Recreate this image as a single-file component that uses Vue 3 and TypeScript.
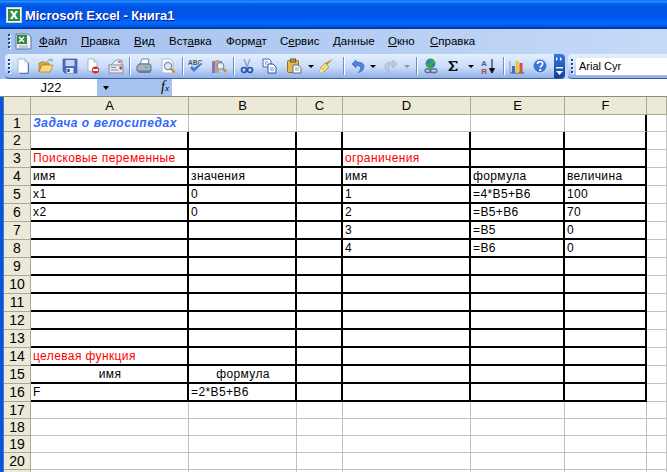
<script setup lang="ts">
interface Tool { w: number; svg?: string; kind?: 'sep' | 'arrow' | 'arrowOff' }

const menu = [
  { pre: '', u: 'Ф', post: 'айл', w: 42 },
  { pre: '', u: 'П', post: 'равка', w: 53 },
  { pre: '', u: 'В', post: 'ид', w: 35 },
  { pre: 'Вст', u: 'а', post: 'вка', w: 57 },
  { pre: 'Форм', u: 'а', post: 'т', w: 54 },
  { pre: 'С', u: 'е', post: 'рвис', w: 53 },
  { pre: '', u: 'Д', post: 'анные', w: 55 },
  { pre: '', u: 'О', post: 'кно', w: 42 },
  { pre: '', u: 'С', post: 'правка', w: 60 },
]

const tools: Tool[] = [
  { w: 23, svg: '<path d="M3 1h7l3 3v11H3z" fill="#fff" stroke="#a9b8d2"/><path d="M10 1v3h3" fill="#dfe8f6" stroke="#a9b8d2"/><path d="M13.500 5v10.500H5" fill="none" stroke="#5c78a8"/>' },
  { w: 24, svg: '<path d="M1 14V5h1l1-1h4l1 1h3v2H4z" fill="#d9a93c" stroke="#a37a22" stroke-width=".7"/><path d="M1 14l3-7h11l-3 7z" fill="#f7d980" stroke="#b08628" stroke-width=".8"/><path d="M9 4c1-2 3-3 5-2M12.500 .8l2 1.300-1.500 1.600" fill="none" stroke="#7a94bd" stroke-width="1"/>' },
  { w: 23, svg: '<path d="M1 1h14v14H3l-2-2z" fill="#4a6cc0" stroke="#34509e" stroke-width=".6"/><rect x="3.500" y="2" width="9" height="6" fill="#c8d6f2"/><rect x="4.500" y="10" width="7" height="5" fill="#e7e7ef"/><rect x="5.500" y="11" width="2" height="3" fill="#26356e"/>' },
  { w: 24, svg: '<path d="M3 1h6l3 3v9H3z" fill="#fff" stroke="#a9b8d2"/><path d="M9 1v3h3" fill="#dfe8f6" stroke="#a9b8d2"/><circle cx="10.500" cy="12" r="3.600" fill="#d8341c"/><rect x="8" y="11" width="5" height="2" fill="#fff"/>' },
  { w: 21, svg: '<path d="M3 7l5-5h6v5" fill="#eef2f8" stroke="#8c98ab"/><rect x="1" y="7" width="14" height="8" fill="#e9ebf1" stroke="#7f8ca3"/><rect x="3" y="9" width="5" height="1" fill="#7f8ca3"/><rect x="3" y="11.500" width="7" height="1" fill="#7f8ca3"/><rect x="11.500" y="8.500" width="2.500" height="3" fill="#c5473a"/><rect x="10" y="3" width="3" height="2" fill="#c98080"/>' },
  { w: 6, kind: 'sep' },
  { w: 23, svg: '<path d="M4 6l2-5h7l-1 5z" fill="#fff" stroke="#7a879c"/><path d="M1 8l2-2h11l1 2v5H1z" fill="#a9b3c4" stroke="#5f6c84"/><path d="M2 13h13l-1 2H3z" fill="#6f7c93"/><rect x="9" y="8.500" width="3" height="1.600" fill="#32d14a"/>' },
  { w: 25, svg: '<path d="M2 1h8l3 3v11H2z" fill="#fff" stroke="#a9b8d2"/><circle cx="8" cy="8" r="3.600" fill="#dceaf8" stroke="#7489ab" stroke-width="1.200"/><path d="M10.500 10.500l4 4" stroke="#c98b1e" stroke-width="2.200"/>' },
  { w: 4, kind: 'sep' },
  { w: 23, svg: '<text x="0" y="6.500" font-family=\'Liberation Sans\' font-size="6.500" font-weight="700" fill="#565656">ABC</text><path d="M2 10l4 4 8-8-1-1-7 5-2-2z" fill="#3f78d8"/>' },
  { w: 23, svg: '<rect x="1" y="3" width="3.500" height="12" fill="#8d74b8"/><rect x="4.500" y="2" width="3.500" height="13" fill="#c5a868"/><rect x="8" y="3" width="3" height="5" fill="#8d74b8"/><circle cx="9.500" cy="8" r="3.400" fill="#e6f0fb" stroke="#6f7f9a"/><path d="M12 10.500l3 3.500" stroke="#c98b1e" stroke-width="2.200"/>' },
  { w: 6, kind: 'sep' },
  { w: 21, svg: '<path d="M5 1l3 8M11 1L8 9" stroke="#98a2b5" stroke-width="1.400" fill="none"/><circle cx="5" cy="12" r="2.500" fill="none" stroke="#2a52b0" stroke-width="1.700"/><circle cx="11" cy="12" r="2.500" fill="none" stroke="#2a52b0" stroke-width="1.700"/>' },
  { w: 24, svg: '<path d="M2 1h6l2 2v6H2z" fill="#fff" stroke="#3d66ae"/><path d="M7 6h5l3 3v6H7z" fill="#fff" stroke="#2c55a2"/><path d="M4 4h3M4 6h2M9 10h4M9 12h4" stroke="#6c8cc4"/>' },
  { w: 26, svg: '<rect x="1.500" y="2.500" width="11" height="12" rx="1" fill="#e5b94a" stroke="#96701e"/><rect x="4.500" y="1" width="5" height="3" fill="#a79a78" stroke="#6d5f3a"/><path d="M7 7h5l3 2.500V15H7z" fill="#fff" stroke="#5d6f90"/><path d="M9 10h4M9 12h4" stroke="#8a9ab6"/>' },
  { w: 8, kind: 'arrow' },
  { w: 22, svg: '<path d="M15 1L9 7 7 5z" fill="#c58b29"/><path d="M2 10l5-5 4 4-5 5z" fill="#f1d884" stroke="#a98a3c" stroke-width=".7"/><path d="M1 12l3-2 2 4-3 1z" fill="#f4e7c0" stroke="#b8a264" stroke-width=".5"/>' },
  { w: 12, kind: 'sep' },
  { w: 18, svg: '<path d="M6 2L2 6l4 4V7.500c3 0 5 1 4.500 3.500-.3 1.500-1 2.700-2 3.500 3-.5 5.500-3 5.500-6 0-3.500-3.500-4.500-8-4.500z" fill="#4a86e4" stroke="#2c5cab" stroke-width=".6"/>' },
  { w: 12, kind: 'arrow' },
  { w: 24, svg: '<path d="M10 2l4 4-4 4V7.500c-3 0-5 1-4.500 3.500.3 1.500 1 2.700 2 3.500-3-.5-5.500-3-5.500-6 0-3.500 3.500-4.500 8-4.500z" fill="#bccbe2" stroke="#93a5c2" stroke-width=".6"/>' },
  { w: 8, kind: 'arrowOff' },
  { w: 11, kind: 'sep' },
  { w: 18, svg: '<circle cx="7.500" cy="5.500" r="5" fill="#3aa358"/><path d="M5 2c2 0 3 1 2 3s-3 1-4 0M9 6c2-1 3 0 3 1l-3 3z" fill="#3a77cf"/><rect x="2" y="11" width="6" height="3.500" rx="1.700" fill="none" stroke="#5d6f90" stroke-width="1.300"/><rect x="7" y="11" width="7" height="3.500" rx="1.700" fill="none" stroke="#5d6f90" stroke-width="1.300"/>' },
  { w: 26, svg: '<path d="M3.500 3h9v2.500h-1L10.500 4.200H6.500L9.500 8l-3 3.800h4l1-1.300h1V13h-9v-1L7 8 3.500 4z" fill="#111"/>' },
  { w: 10, kind: 'arrow' },
  { w: 24, svg: '<text x="1" y="7.500" font-family=\'Liberation Sans\' font-size="8" font-weight="700" fill="#3a5da8">А</text><text x="1" y="15.500" font-family=\'Liberation Sans\' font-size="8" font-weight="700" fill="#a8504a">Я</text><path d="M12 1v12M9.500 10.500L12 15l2.500-4.500z" stroke="#111" fill="#111"/>' },
  { w: 6, kind: 'sep' },
  { w: 22, svg: '<path d="M1 15h14" stroke="#555"/><path d="M1 3v12" stroke="#8f9bb0"/><rect x="3" y="8" width="3" height="7" fill="#3a6ed0"/><rect x="6.500" y="3" width="3" height="12" fill="#ecc62c"/><rect x="10.500" y="5" width="3" height="10" fill="#d8542c"/>' },
  { w: 24, svg: '<circle cx="8" cy="8" r="7" fill="#3c74d8" stroke="#c8d8f2" stroke-width="1.200"/><path d="M5.500 6c0-3.200 5.200-3.200 5.200-.2 0 2-2.500 2-2.500 4" fill="none" stroke="#fff" stroke-width="1.700"/><rect x="7.200" y="11" width="2" height="2" fill="#fff"/>' },
]

const colLetters = ['A', 'B', 'C', 'D', 'E', 'F', '']

type CellText = { t: string; cls?: string }
const content: Record<number, Record<number, CellText>> = {
  1: { 0: { t: 'Задача о велосипедах', cls: 'title-cell' } },
  3: { 0: { t: 'Поисковые переменные', cls: 'red' }, 3: { t: 'ограничения', cls: 'red' } },
  4: { 0: { t: 'имя' }, 1: { t: 'значения' }, 3: { t: 'имя' }, 4: { t: 'формула' }, 5: { t: 'величина' } },
  5: { 0: { t: 'x1' }, 1: { t: '0' }, 3: { t: '1' }, 4: { t: '=4*B5+B6' }, 5: { t: '100' } },
  6: { 0: { t: 'x2' }, 1: { t: '0' }, 3: { t: '2' }, 4: { t: '=B5+B6' }, 5: { t: '70' } },
  7: { 3: { t: '3' }, 4: { t: '=B5' }, 5: { t: '0' } },
  8: { 3: { t: '4' }, 4: { t: '=B6' }, 5: { t: '0' } },
  14: { 0: { t: 'целевая функция', cls: 'red' } },
  15: { 0: { t: 'имя', cls: 'center' }, 1: { t: 'формула', cls: 'center' } },
  16: { 0: { t: 'F' }, 1: { t: '=2*B5+B6' } },
}

const rows = Array.from({ length: 21 }, (_, i) => i + 1)
const cols = [0, 1, 2, 3, 4, 5, 6]

function cellClass(r: number, c: number): (string | undefined)[] {
  const boxed = r >= 2 && r <= 16
  const vertical = c < 6 && (boxed || (r === 1 && c === 5))
  return [
    boxed && c < 6 ? 'bb' : '',
    vertical ? 'br' : '',
    content[r]?.[c]?.cls,
  ]
}
</script>

<template>
  <div class="win">
    <header class="titlebar">
      <svg class="appicon" width="16" height="16" viewBox="0 0 16 16">
        <rect x=".5" y=".5" width="15" height="15" fill="#fff" stroke="#c9d6c4" />
        <rect x="2" y="2" width="12" height="12" fill="#2f8f46" />
        <path d="M4 4h2.500L8 6.500 9.500 4H12L9.300 8 12 12H9.500L8 9.500 6.500 12H4l2.700-4z" fill="#fff" />
      </svg>
      <span class="titletext">Microsoft Excel - Книга1</span>
    </header>

    <nav class="menubar">
      <span class="grip"><i v-for="n in 4" :key="n"></i></span>
      <svg class="docicon" width="18" height="17" viewBox="0 0 18 17">
        <path d="M2 1h12l3 3v12H2z" fill="#eef1f6" stroke="#64748f" />
        <rect x="3" y="2" width="10" height="9" fill="#2e8a44" />
        <path d="M5 4l5 5M10 4L5 9" stroke="#fff" stroke-width="1.500" />
        <path d="M5 13h9M5 15h9" stroke="#98a6bf" />
      </svg>
      <span v-for="m in menu" :key="m.u + m.post" class="menuitem" :style="{ width: m.w + 'px' }">{{ m.pre }}<u>{{ m.u }}</u>{{ m.post }}</span>
    </nav>

    <div class="toolrow">
      <div class="toolbar">
        <span class="grip"><i v-for="n in 4" :key="n"></i></span>
        <template v-for="(tool, i) in tools" :key="i">
          <span class="tool" :style="{ width: tool.w + 'px' }">
            <i v-if="tool.kind === 'sep'" class="sep"></i>
            <i v-else-if="tool.kind === 'arrow'" class="arrow"></i>
            <i v-else-if="tool.kind === 'arrowOff'" class="arrow off"></i>
            <svg v-else width="16" height="16" viewBox="0 0 16 16" v-html="tool.svg"></svg>
          </span>
        </template>
        <span class="chevron">
          <svg width="11" height="24" viewBox="0 0 11 24">
            <path d="M2 3l2 2-2 2zM6 3l2 2-2 2z" fill="#fff" />
            <rect x="2" y="13" width="7" height="1.500" fill="#fff" />
            <path d="M2 17h7l-3.500 4z" fill="#fff" />
          </svg>
        </span>
      </div>
      <div class="fontbar">
        <span class="grip"><i v-for="n in 4" :key="n"></i></span>
        <span class="fontbox">Arial Cyr</span>
      </div>
    </div>

    <div class="formula">
      <div class="namebox">J22</div>
      <div class="fxpart">
        <i class="arrow namearrow"></i>
        <span class="fx">f<small>x</small></span>
      </div>
      <div class="fxinput"></div>
    </div>

    <div class="body">
      <div class="edge"></div>
      <div class="sheet">
        <div class="corner"></div>
        <div v-for="l in colLetters" :key="l" class="colhead">{{ l }}</div>
        <template v-for="r in rows" :key="r">
          <div class="rowhead" :class="{ tall: r >= 2 && r <= 16 }">{{ r <= 20 ? r : '' }}</div>
          <div v-for="c in cols" :key="c" class="cell" :class="cellClass(r, c)">{{ content[r]?.[c]?.t }}</div>
        </template>
      </div>
    </div>
  </div>
</template>

<style>
html, body { margin: 0; overflow: hidden; }
</style>

<style scoped>
.win {
  width: 667px;
  height: 472px;
  overflow: hidden;
  background: #fff;
  font-family: "Liberation Sans", Arial, sans-serif;
  color: #000;
}
.titlebar {
  height: 29px;
  display: flex;
  align-items: center;
  padding: 1px 0 0 6px;
  box-sizing: border-box;
  background: linear-gradient(#0058ee 0, #3593ff 4%, #288eff 6%, #127dff 8%, #036ffc 10%, #0262ee 14%, #0057e5 20%, #0054e3 24%, #0055eb 56%, #005bf5 66%, #026afe 76%, #0062ef 86%, #0052d6 92%, #0040ab 96%, #003092 100%);
}
.appicon { flex: none; }
.titletext {
  margin-left: 3px;
  color: #fff;
  font-weight: 700;
  font-size: 13px;
  letter-spacing: -.08px;
  text-shadow: 1px 1px 0 #0f1089;
  white-space: nowrap;
}
.menubar {
  height: 25px;
  display: flex;
  align-items: center;
  box-sizing: border-box;
  padding: 0 0 1px 8px;
  background: linear-gradient(90deg, #a3bfee, #c5daf8);
  font-size: 11.5px;
  white-space: nowrap;
}
.docicon { margin: 0 7px 0 3px; flex: none; }
.menuitem { flex: none; }
.grip {
  display: flex;
  flex-direction: column;
  gap: 2px;
  flex: none;
  width: 3px;
}
.grip i {
  width: 2px;
  height: 2px;
  background: #27417d;
  box-shadow: 1px 1px 0 #fff;
}
.toolrow {
  height: 25px;
  display: flex;
  background: linear-gradient(90deg, #a3bfee, #c5daf8);
}
.toolbar {
  margin-left: 5px;
  width: 560px;
  display: flex;
  align-items: center;
  box-sizing: border-box;
  padding-left: 3px;
  border-radius: 4px;
  border-bottom: 1px solid #3b619c;
  background: linear-gradient(#e3effd, #c9dcf9 55%, #91b0e8);
}
.tool {
  flex: none;
  display: flex;
  align-items: center;
  justify-content: center;
  height: 22px;
}
.sep {
  width: 1px;
  height: 18px;
  background: #6a8ccb;
  box-shadow: 1px 0 0 #fff;
}
.arrow {
  width: 0;
  height: 0;
  border-left: 3px solid transparent;
  border-right: 3px solid transparent;
  border-top: 3px solid #000;
}
.arrow.off { border-top-color: #8a94a8; }
.chevron {
  margin-left: auto;
  width: 11px;
  height: 24px;
  background: linear-gradient(#3a78dc, #0f3f9e);
  border-radius: 0 4px 4px 0;
  flex: none;
}
.chevron svg { display: block; }
.fontbar {
  margin-left: 3px;
  flex: 1;
  display: flex;
  align-items: center;
  padding-left: 3px;
  border-bottom: 1px solid #3b619c;
  border-radius: 4px 0 0 4px;
  background: linear-gradient(#e3effd, #c9dcf9 55%, #91b0e8);
}
.fontbox {
  margin-left: 2px;
  flex: 1;
  height: 17px;
  line-height: 17px;
  padding-left: 3px;
  background: #fff;
  font-size: 11px;
}
.formula {
  height: 17px;
  display: flex;
  background: #fff;
  padding-left: 5px;
}
.namebox {
  width: 92px;
  font-size: 13px;
  line-height: 17px;
  text-align: center;
}
.fxpart {
  width: 75px;
  background: #a6c2ee;
  display: flex;
  align-items: center;
  justify-content: space-between;
  box-sizing: border-box;
  padding: 0 3px 0 6px;
}
.namearrow {
  border-left-width: 3.5px;
  border-right-width: 3.5px;
  border-top-width: 4px;
}
.fx {
  font-family: "Liberation Serif", serif;
  font-style: italic;
  font-size: 14px;
  line-height: 15px;
}
.fx small { font-size: 9px; }
.fxinput { flex: 1; }
.body {
  display: flex;
  border-top: 1px solid #8f8b77;
}
.edge {
  width: 4px;
  flex: none;
  background: linear-gradient(90deg, #0a53d9, #0a53d9 75%, #7d99cf);
  height: 375px;
}
.sheet {
  flex: 1;
  display: grid;
  grid-template-columns: 27px 158px 108px 46px 128px 94px 82px 1fr;
  grid-auto-rows: auto;
  font-size: 13px;
}
.corner, .colhead, .rowhead {
  background: #ece9d8;
  box-sizing: border-box;
  border-right: 1px solid #aca899;
  border-bottom: 1px solid #aca899;
}
.corner, .colhead {
  height: 18px;
  line-height: 17px;
  text-align: center;
  font-size: 13px;
}
.rowhead {
  height: 17px;
  line-height: 16px;
  text-align: center;
  font-size: 14px;
}
.rowhead.tall { height: 18px; line-height: 17px; }
.cell {
  box-sizing: border-box;
  border-right: 1px solid #c0c0c0;
  border-bottom: 1px solid #c0c0c0;
  padding-left: 2px;
  white-space: nowrap;
  overflow: visible;
  font-size: 12px;
  line-height: 16px;
  letter-spacing: .38px;
}
.cell.bb { border-bottom: 2px solid #000; }
.cell.br { border-right: 2px solid #000; }
.cell.red { color: #f00; }
.cell.center { text-align: center; }
.cell.title-cell { color: #3366ff; font-weight: 700; font-style: italic; letter-spacing: .55px; }
</style>
